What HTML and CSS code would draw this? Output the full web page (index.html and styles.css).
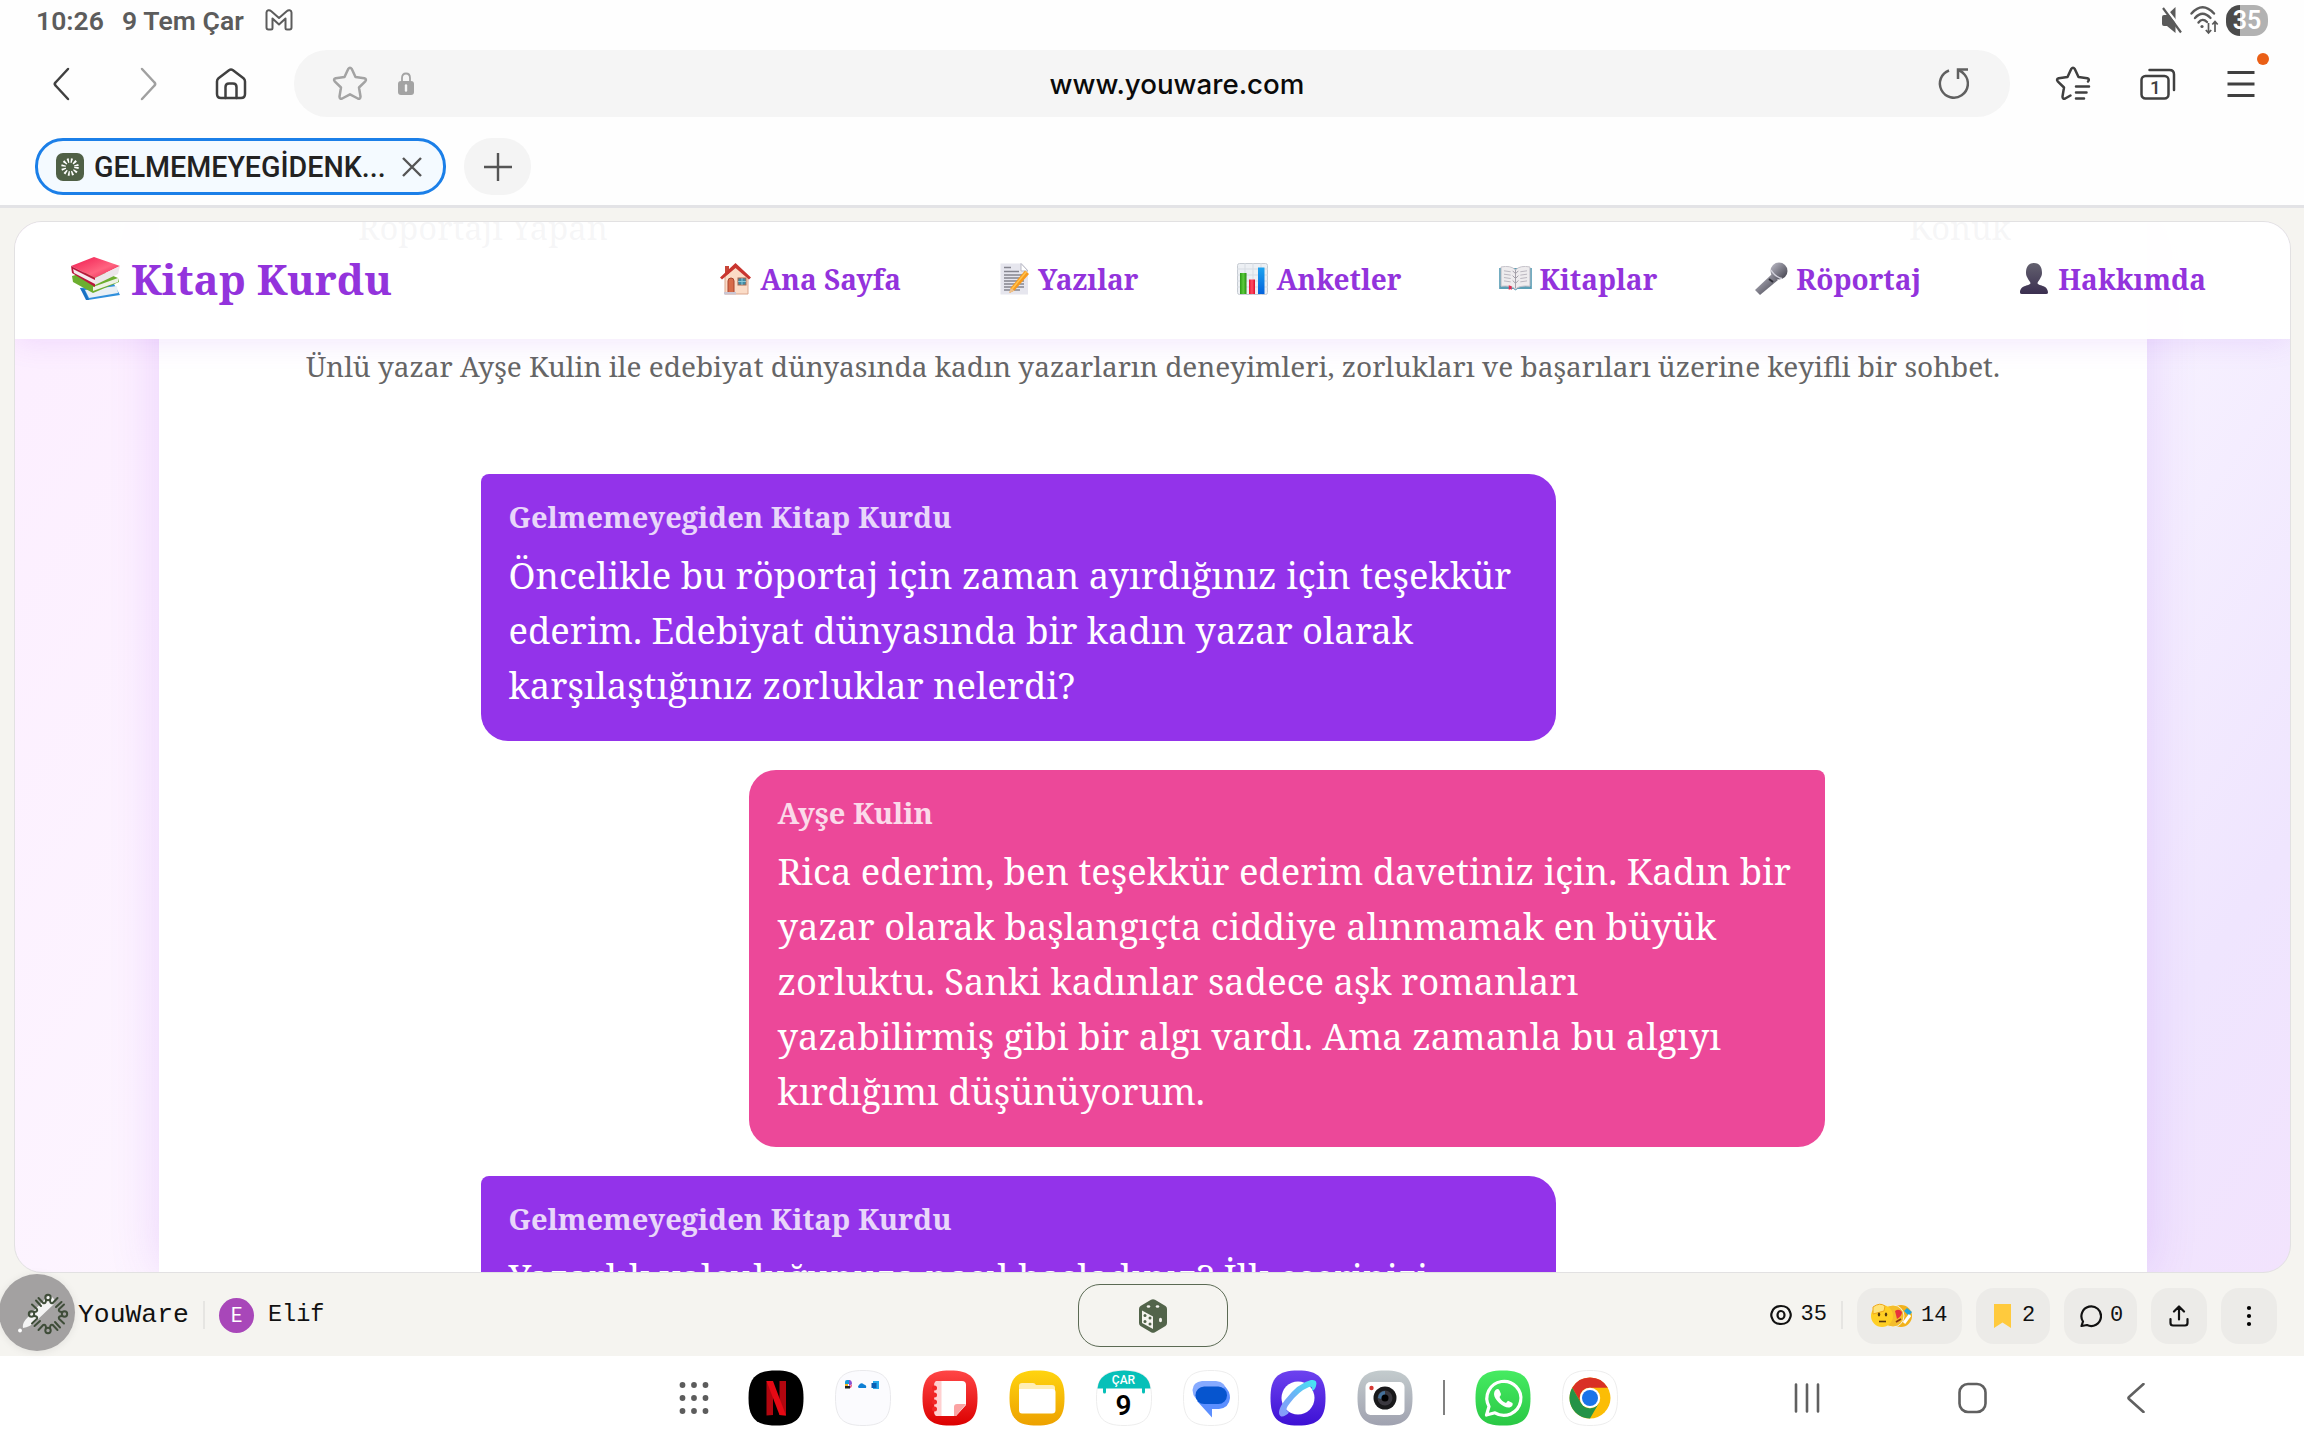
FILE: index.html
```html
<!DOCTYPE html>
<html lang="tr">
<head>
<meta charset="utf-8">
<title>Kitap Kurdu</title>
<link rel="stylesheet" href="styles.css">
</head>
<body>
<svg class="defs" width="0" height="0">
  <defs>
    <path id="squircle" d="M28 .5C48.500 .5 55.500 8 55.500 28S48.500 55.500 28 55.500.5 48 .5 28 7.500.5 28 .5Z"/>
    <linearGradient id="gRed" x2="0" y2="1"><stop stop-color="#ff4646"/><stop offset="1" stop-color="#dc0000"/></linearGradient>
    <linearGradient id="gYellow" x2="0" y2="1"><stop stop-color="#ffd40f"/><stop offset="1" stop-color="#eda100"/></linearGradient>
    <linearGradient id="gViolet" x2="0" y2="1"><stop stop-color="#6d42ef"/><stop offset="1" stop-color="#3d10d4"/></linearGradient>
    <linearGradient id="gRing" x1="1" y1="0" x2="0" y2="1"><stop stop-color="#43eaf2"/><stop offset=".5" stop-color="#6ab4f6"/><stop offset="1" stop-color="#8c96fb"/></linearGradient>
    <linearGradient id="gGrey" x2="0" y2="1"><stop stop-color="#c3cbcd"/><stop offset="1" stop-color="#a0a2b0"/></linearGradient>
    <linearGradient id="gGreen" x2="0" y2="1"><stop stop-color="#46eb62"/><stop offset="1" stop-color="#2ac845"/></linearGradient>
    <linearGradient id="gBook" x2="1" y2="1"><stop stop-color="#f0194f"/><stop offset=".6" stop-color="#ff6480"/><stop offset="1" stop-color="#e4184c"/></linearGradient>
    <linearGradient id="gMic" x2="1" y2="1"><stop stop-color="#c0bfcb"/><stop offset="1" stop-color="#3b3a45"/></linearGradient>
    <linearGradient id="gMan" x2="0" y2="1"><stop stop-color="#63616f"/><stop offset="1" stop-color="#3b2f50"/></linearGradient>
    <linearGradient id="gBarG" x2="1"><stop stop-color="#2a9b12"/><stop offset=".5" stop-color="#5ccc3c"/><stop offset="1" stop-color="#278c12"/></linearGradient>
    <linearGradient id="gBarR" x2="1"><stop stop-color="#e91235"/><stop offset=".5" stop-color="#ff4e62"/><stop offset="1" stop-color="#e00a2c"/></linearGradient>
    <linearGradient id="gBarB" x2="0" y2="1"><stop stop-color="#1da3ee"/><stop offset="1" stop-color="#0462dc"/></linearGradient>
    <g id="ray"><circle cx="0" cy="-16.500" r="2.700"/><path d="M-2-14Q-2-10-4.800-11L-9.500-16M2-14Q2-10 4.800-11L9.500-16M-7-8L-12-13.500"/></g>
  </defs>
</svg>

<div class="status">
  <span class="clock">10:26</span><span class="date">9 Tem Çar</span>
  <svg class="gmail" width="28" height="22" viewBox="0 0 28 22"><path d="M1.500 18.500V3.500C1.500 1 4.500.5 6 2L14 9L22 2C23.500.5 26.500 1 26.500 3.500V18.500Q26.500 20.500 24.500 20.500H22Q20.500 20.500 20.500 19V9.500L14 15.500L7.500 9.500V19Q7.500 20.500 6 20.500H3.500Q1.500 20.500 1.500 18.500Z"/></svg>
  <svg class="mute" width="22" height="30" viewBox="0 0 22 30"><path d="M1 12Q1 10 3 10H6L14.500 2V28L6 21H3Q1 21 1 19Z" fill="#5a5a5a"/><path d="M3.500 2L21.500 25" stroke="#fefefe" stroke-width="2.500"/><path d="M2 3L20 27.500" stroke="#5a5a5a" stroke-width="2.200"/></svg>
  <svg class="wifi" width="30" height="32" viewBox="0 0 30 32"><g fill="none" stroke="#5a5a5a" stroke-width="2.400" stroke-linecap="round"><path d="M1.500 9.500Q12.500-3 24 9.500"/><path d="M5 14Q12.500 5.500 20.500 14"/><path d="M8.500 18.500Q12.500 13.500 17 18"/></g><circle cx="12" cy="22.500" r="1.600" fill="#5a5a5a"/><path d="M18.500 19V28.500M15.800 26L18.500 29L21.200 26M25 28V18M22.300 20.500L25 17.500L27.700 20.500" fill="none" stroke="#5a5a5a" stroke-width="1.700"/></svg>
  <span class="battery">35</span>
</div>

<div class="toolbar">
  <svg class="ic back" width="20" height="34" viewBox="0 0 20 34"><path d="M17 2L4.500 15.500Q3 17 4.500 18.500L17 32"/></svg>
  <svg class="ic fwd" width="20" height="34" viewBox="0 0 20 34"><path d="M3 2L15.500 15.500Q17 17 15.500 18.500L3 32"/></svg>
  <svg class="ic home" width="32" height="32" viewBox="0 0 32 32"><path d="M2 13.500Q2 11.500 3.500 10.200L14 2.200Q16 .8 18 2.200L28.500 10.200Q30 11.500 30 13.500V26Q30 30 26 30H6Q2 30 2 26Z"/><path d="M10.500 30V19Q10.500 15.500 14 15.500H18Q21.500 15.500 21.500 19V30"/></svg>
  <div class="urlbar">
    <svg class="star" width="36" height="35" viewBox="0 0 36 35"><path d="M16.200 3Q18 .6 19.800 3L23.500 11L32.300 12.200Q35 13 33.300 15.300L27 21.500L28.500 30.500Q28.500 33.400 25.800 32.500L18 28.300L10.200 32.500Q7.500 33.400 7.500 30.500L9 21.500L2.700 15.300Q1 13 3.700 12.200L12.500 11Z"/></svg>
    <svg class="lock" width="16" height="23" viewBox="0 0 16 23"><path d="M4 11V6Q4 1.500 8 1.500T12 6V11" fill="none" stroke="#a3a3a3" stroke-width="1.800"/><rect y="9" width="16" height="14" rx="3" fill="#a3a3a3"/><path d="M8 13.500V18.500" stroke="#f5f5f5" stroke-width="2.400" stroke-linecap="round"/></svg>
    <span class="url">www.youware.com</span>
    <svg class="reload" width="34" height="34" viewBox="0 0 34 34"><path d="M12 3.500A14 14 0 1 0 27.500 7.500Q25 4.500 21.500 3"/><path d="M21 12V2.500H31"/></svg>
  </div>
  <svg class="ic fav" width="36" height="35" viewBox="0 0 36 35"><path d="M33 15.500Q35 13 32.300 12.200L23.500 11L19.800 3Q18 .6 16.200 3L12.500 11L3.700 12.200Q1 13 2.700 15.300L9 21.500L7.500 30.500Q7.500 33.400 10.200 32.500L15.500 29.500"/><path d="M21 20.500H34M21 26.500H31.500M21 32.500H29"/></svg>
  <div class="tabs"><svg class="ic" width="36" height="32" viewBox="0 0 36 32"><rect x="1.500" y="8" width="27" height="22.500" rx="4"/><path d="M9.500 2H29.500Q34 2 34 6.500V22"/></svg><span class="tabs-n">1</span></div>
  <svg class="ic menu" width="28" height="28" viewBox="0 0 28 28"><path d="M.5 2.500H27.500M.5 14H27.500M.5 25.500H27.500"/></svg>
  <i class="dot"></i>
</div>

<div class="tabstrip">
  <div class="tab">
    <svg width="28" height="28" viewBox="0 0 28 28"><rect width="28" height="28" rx="7" fill="#4f6046"/><circle cx="14" cy="14" r="6.500" fill="none" stroke="#fff" stroke-width="4.500" stroke-dasharray="1.600 1.800"/></svg>
    <span>GELMEMEYEGİDENK...</span>
    <svg class="x" width="20" height="20" viewBox="0 0 20 20"><path d="M1 1L19 19M19 1L1 19"/></svg>
  </div>
  <div class="plus"><svg class="x" width="28" height="28" viewBox="0 0 28 28"><path d="M14 0V28M0 14H28"/></svg></div>
</div>

<main class="stage">
  <div class="card">
    <div class="panel">
      <div class="roles"><span>Röportajı Yapan</span><span>Konuk</span></div>
      <p class="intro">Ünlü yazar Ayşe Kulin ile edebiyat dünyasında kadın yazarların deneyimleri, zorlukları ve başarıları üzerine keyifli bir sohbet.</p>
      <div class="chat">
        <div class="msg ask"><b>Gelmemeyegiden Kitap Kurdu</b><p>Öncelikle bu röportaj için zaman ayırdığınız için teşekkür<br>ederim. Edebiyat dünyasında bir kadın yazar olarak<br>karşılaştığınız zorluklar nelerdi?</p></div>
        <div class="msg reply"><b>Ayşe Kulin</b><p>Rica ederim, ben teşekkür ederim davetiniz için. Kadın bir<br>yazar olarak başlangıçta ciddiye alınmamak en büyük<br>zorluktu. Sanki kadınlar sadece aşk romanları<br>yazabilirmiş gibi bir algı vardı. Ama zamanla bu algıyı<br>kırdığımı düşünüyorum.</p></div>
        <div class="msg ask"><b>Gelmemeyegiden Kitap Kurdu</b><p>Yazarlık yolculuğunuza nasıl başladınız? İlk eserinizi</p></div>
      </div>
    </div>
    <header class="site">
      <div class="brand">
        <svg width="50" height="44" viewBox="0 0 50 44"><path d="M9 31L43 27L49 38L17 43Z" fill="#2f8fdc"/><path d="M14 33L46 29L47 36L18 41Z" fill="#e9f0f6"/><path d="M9 31L15 43L18 43L13 32Z" fill="#1a72c4"/><path d="M1 19L26 12L47 21L48 25L22 36L2 25Z" fill="#6cae2f"/><path d="M22 30L47 21L47 25L22 34Z" fill="#eef2e6"/><path d="M0 9L23 0L49 9L24 21Z" fill="url(#gBook)"/><path d="M0 9L24 21V30L1 16Z" fill="#b9163c"/><path d="M2 12L24 23V27L3 16Z" fill="#f5e9ed"/><path d="M24 21L49 9L47 17L24 28Z" fill="#ece6ea"/></svg>
        <span>Kitap Kurdu</span>
      </div>
      <nav>
        <a><svg width="32" height="32" viewBox="0 0 32 32"><path d="M5 13L16 4L28 13V31H5Z" fill="#fbdcc7" stroke="#dba68d"/><path d="M5 3H9V11H5Z" fill="#c84638"/><path d="M0 14.500L15.500 0L31 14.500L29 16.500L15.500 5L2 16.500Z" fill="#c9352f"/><path d="M8 30V18Q8 15 11 15T14 18V30Z" fill="#d76c4a" stroke="#a8452e"/><rect x="18" y="15" width="8" height="7" fill="#3f8ba5" stroke="#a86950"/><path d="M22 15V22M18 18.500H26" stroke="#8ac8d8"/><path d="M4 29H16V31.500H4Z" fill="#cac6d3"/></svg>Ana Sayfa</a>
        <a><svg width="30" height="32" viewBox="0 0 30 32"><path d="M.5.500H22L28 7V31.500H.5Z" fill="#e6e6ee"/><path d="M21 .5V8H28Z" fill="#fff" stroke="#b9b9c4"/><path d="M4 4.500H11M4 8.500H19M4 12H24M4 15H24M4 18H24M4 21H24M4 24H24M4 27H20" stroke="#85858f" stroke-width="1.300"/><path d="M25 7.500L29 11L14.500 27.500L9.500 30L10.500 25Z" fill="#f79a1e"/><path d="M26.500 8.500L12 26" stroke="#ffc34f" stroke-width="1.500"/><path d="M9.500 30L10.500 25L14.500 27.500Z" fill="#edc08d"/></svg>Yazılar</a>
        <a><svg width="31" height="32" viewBox="0 0 31 32"><rect x=".5" y=".5" width="30" height="31" rx="2" fill="#edf0f4" stroke="#c6cbd2"/><path d="M0 6H31M0 12H31M0 18H31M0 24H31M8 0V32M16 0V32M24 0V32" stroke="#d7dce3"/><rect x="3" y="10" width="6.500" height="21" fill="url(#gBarG)"/><rect x="12" y="16.500" width="6" height="14.500" fill="url(#gBarR)"/><rect x="21" y="4.500" width="6.500" height="26.500" fill="url(#gBarB)"/></svg>Anketler</a>
        <a class="books"><svg width="33" height="25" viewBox="0 0 34 26"><path d="M0 2H34V24H19L17 25.500L15 24H0Z" fill="#5b9fb6"/><path d="M2 1Q12-1 17 4Q22-1 32 1V21Q21 20 17 24Q13 20 2 21Z" fill="#eeecee" stroke="#c4c1c8"/><path d="M17 4V23M14 5L17 8L20 5M14 10L17 13L20 10M14 15L17 18L20 15" fill="none" stroke="#a19da7"/><path d="M5 5L12 6M5 8.500L12 9.500M5 12L12 13M5 15.500L12 16.500M29 5L22 6M29 8.500L22 9.500M29 12L22 13M29 15.500L22 16.500" stroke="#b8b4bd"/><path d="M10 20L13 21V25L11.500 24L10 25Z" fill="#e02b50"/></svg>Kitaplar</a>
        <a class="talk"><svg width="34" height="34" viewBox="0 0 34 34"><path d="M18 12L24 18L6 33L1 28Z" fill="url(#gMic)"/><path d="M15 17L19 20" stroke="#2e2d36" stroke-width="2"/><circle cx="25" cy="9" r="8.500" fill="url(#gMic)"/><path d="M17 8Q21 15 28 16.500" fill="none" stroke="#d2d1db" stroke-width="1.500"/></svg>Röportaj</a>
        <a class="about"><svg width="28" height="31" viewBox="0 0 28 31"><path d="M14 0C20 0 22 4.500 22 10C22 14.500 18 18 17.500 20C17.500 23 28 21.500 28 29.500Q28 31 26 31H2Q0 31 0 29.500C0 21.500 10.500 23 10.500 20C10 18 6 14.500 6 10C6 4.500 8 0 14 0Z" fill="url(#gMan)"/></svg>Hakkımda</a>
      </nav>
    </header>
  </div>
</main>

<footer class="bar">
  <div class="fab"><svg width="76" height="78" viewBox="0 0 76 78"><path d="M24 54C23 49 27 45 30 42L47 24Q50 20 53 23L55 25Q57 28 54 31L36 48Q31 53 24 54Z" fill="#f4f4f4"/><circle cx="21" cy="56.500" r="1.900" fill="#fff"/><g transform="translate(49 40)" fill="none" stroke="#3f4d39" stroke-width="2" stroke-linecap="round" stroke-linejoin="round"><use href="#ray"/><use href="#ray" transform="rotate(90)"/><use href="#ray" transform="rotate(180)"/><use href="#ray" transform="rotate(270)"/></g></svg></div>
  <span class="yw">YouWare</span><i class="sep"></i><span class="avatar">E</span><span class="user">Elif</span>
  <div class="dice"><svg width="28" height="34" viewBox="0 0 28 34"><path d="M12 .8Q14-.4 16 .8L26.500 7Q28 8 28 10V24Q28 26 26.500 27L16 33.200Q14 34.400 12 33.200L1.500 27Q0 26 0 24V10Q0 8 1.500 7Z" fill="#52644a"/><path d="M3 11.500L14 17.500V30L3 24Z" fill="#f5f4f0"/><g fill="#52644a"><circle cx="6" cy="16.500" r="1.500"/><circle cx="11" cy="19" r="1.500"/><circle cx="6" cy="22.500" r="1.500"/><circle cx="11" cy="25" r="1.500"/></g><g fill="#f5f4f0"><ellipse cx="9.500" cy="7.500" rx="1.800" ry="1.200"/><ellipse cx="18.500" cy="7.500" rx="1.800" ry="1.200"/><ellipse cx="21.500" cy="21" rx="1.500" ry="2.300"/></g></svg></div>
  <div class="stats">
    <span class="views"><svg width="22" height="22" viewBox="0 0 22 22"><path d="M11 2C16 2 19 4.500 20 8Q21.500 11 20 14C19 17.500 16 20 11 20S3 17.500 2 14Q.5 11 2 8C3 4.500 6 2 11 2Z"/><ellipse cx="11" cy="11" rx="3.500" ry="4"/></svg>35</span>
    <i class="sep"></i>
    <span class="pill p1"><span class="faces"><svg width="42" height="26" viewBox="0 0 42 26"><circle cx="30" cy="13" r="11" fill="#f2b21b"/><path d="M36 5L41 9L38 13L33 8Z" fill="#25a3d8"/><path d="M33 20L39 12" stroke="#fff" stroke-width="3"/><circle cx="22" cy="13" r="11" fill="#f4bd2a" stroke="#f5f0e0" /><path d="M24 8Q28 5 31 9Q31 13 26 16Z" fill="#e8333b"/><path d="M25 19L30 16" stroke="#8b3a12" stroke-width="2"/><circle cx="11" cy="13" r="11" fill="#ffcf24"/><path d="M2 4Q9-1 14 3L13 8L2 11Z" fill="#ffe37a" stroke="#f0a818"/><ellipse cx="8" cy="11.500" rx="1.200" ry="2" fill="#593b10"/><ellipse cx="15" cy="11.500" rx="1.200" ry="2" fill="#593b10"/><path d="M8 18.500H15" stroke="#593b10" stroke-width="1.600"/></svg></span>14</span>
    <span class="pill p2"><svg width="17" height="24" viewBox="0 0 17 24"><path d="M0 0H17V24L8.500 18.500L0 24Z" fill="#ffca3d"/></svg>2</span>
    <span class="pill p3"><svg class="ln" width="22" height="24" viewBox="0 0 22 24"><path d="M1.500 22L3 17.500A9.800 9.800 0 1 1 7 21Z"/></svg>0</span>
    <span class="pill p4"><svg class="ln" width="20" height="22" viewBox="0 0 20 22"><path d="M10 14.500V2M5 6.500L10 1.500L15 6.500M1.500 14V18Q1.500 20.500 4 20.500H16Q18.500 20.500 18.500 18V14"/></svg></span>
    <span class="pill p4"><svg width="6" height="22" viewBox="0 0 6 22"><circle cx="3" cy="3" r="2.100"/><circle cx="3" cy="11" r="2.100"/><circle cx="3" cy="19" r="2.100"/></svg></span>
  </div>
</footer>

<div class="dock">
  <div class="apps">
    <svg width="30" height="34" viewBox="0 0 30 34" fill="#5c5c5c"><circle cx="3.500" cy="4" r="2.900"/><circle cx="15" cy="4" r="2.900"/><circle cx="26.500" cy="4" r="2.900"/><circle cx="3.500" cy="17" r="2.900"/><circle cx="15" cy="17" r="2.900"/><circle cx="26.500" cy="17" r="2.900"/><circle cx="3.500" cy="30" r="2.900"/><circle cx="15" cy="30" r="2.900"/><circle cx="26.500" cy="30" r="2.900"/></svg>
    <svg class="app" viewBox="0 0 56 56"><use href="#squircle"/><path d="M18.500 11H25V45L18.500 45.500ZM31.500 11H38V45.500L31.500 45Z" fill="#b1060f"/><path d="M18.500 11H25L38 45.500L31.500 45Z" fill="#e50914"/></svg>
    <svg class="app" viewBox="0 0 56 56"><use href="#squircle" fill="#fbfbfe" stroke="#e9e9ec"/><g transform="translate(9 10)"><path d="M1 2Q1 0 3 0H6V4H1Z" fill="#159cd8"/><path d="M5 0Q8 0 8 4L5 6Z" fill="#8a4fd0"/><path d="M1 4H4V8H1Z" fill="#f2b51d"/><path d="M4 8L8 4Q8 8 6 8Z" fill="#e35480"/><path d="M1 6H6V8.500H1Z" fill="#222"/></g><path d="M24 18Q22 17 24 15Q26 12 29 14.500Q32 15 31 18Z" fill="#0f7fd4"/><rect x="38" y="11" width="6" height="8" fill="#28a8ea"/><rect x="36.500" y="13" width="5" height="5" fill="#0a5fb4"/></svg>
    <svg class="app" viewBox="0 0 56 56"><use href="#squircle" fill="url(#gRed)"/><path d="M16 11H40Q44 11 44 15V35L34 46H16Q12.500 46 12.500 43V14Q12.500 11 16 11Z" fill="#fff"/><path d="M12.500 14Q12.500 11 16 11H19.500V46H16Q12.500 46 12.500 43Z" fill="#ffd0d0"/><path d="M44 34L34 46L32 46V37Q32 34 35 34Z" fill="#fba3a3"/><g fill="#f12626"><circle cx="12.500" cy="18" r="2.500"/><circle cx="12.500" cy="25" r="2.500"/><circle cx="12.500" cy="32" r="2.500"/><circle cx="12.500" cy="39" r="2.500"/></g></svg>
    <svg class="app" viewBox="0 0 56 56"><use href="#squircle" fill="url(#gYellow)"/><path d="M10 16Q10 13 13 13H24Q26 13 27 15H43Q46 15 46 18V24H10Z" fill="#ffeeb5"/><path d="M10 19H43Q46.500 19 46.500 22V40Q46.500 43.500 43 43.500H13Q10 43.500 10 40Z" fill="#fff"/></svg>
    <div class="cal"><svg class="app" viewBox="0 0 56 56"><use href="#squircle" fill="#fff" stroke="#ededed"/><path d="M1.500 18.500Q3 1 28 .5Q53 1 54.500 18.500Z" fill="#06c0b8"/><path d="M8.500 17V22M47.500 17V22" stroke="#06c0b8" stroke-width="3" stroke-linecap="round"/></svg><span class="cal-m">ÇAR</span><span class="cal-d">9</span></div>
    <svg class="app" viewBox="0 0 56 56"><use href="#squircle" fill="#fff" stroke="#ededed"/><path d="M19 11H33Q43 12 44 22L38 32H20Q10 30 9.500 20Q10 12 19 11Z" fill="#86aaff"/><path d="M42 17Q47 21 47 28Q46 38 36 39H29V47.500L14 31Z" fill="#5c8fff"/><rect x="12.500" y="16.500" width="31.500" height="17.500" rx="8.700" fill="#0655cf"/></svg>
    <svg class="app" viewBox="0 0 56 56"><use href="#squircle" fill="url(#gViolet)"/><circle cx="28" cy="28" r="16.500" fill="#fff"/><path d="M10.500 46Q6 42 15 30Q28 13 41 10Q48 9 46 16Q45 20 42 21Q43 16 39 17Q29 21 20 33Q15 39 17 41Q21 42 16 45Q12 47.500 10.500 46Z" fill="url(#gRing)"/></svg>
    <svg class="app" viewBox="0 0 56 56"><use href="#squircle" fill="url(#gGrey)"/><rect x="8.500" y="12" width="39" height="33" rx="5" fill="#fff"/><circle cx="14.500" cy="18" r="2.200" fill="#d63a34"/><circle cx="28" cy="28" r="11.500" fill="#19191b"/><circle cx="28" cy="28" r="7.500" fill="#3a383f"/><path d="M21 28A7 7 0 0 1 28 21V25L24 29Z" fill="#45719a"/><circle cx="28" cy="28" r="3.500" fill="#000"/></svg>
    <i class="rule"></i>
    <svg class="app" viewBox="0 0 56 56"><use href="#squircle" fill="url(#gGreen)"/><path d="M11.500 45L14 36.500A17 17 0 1 1 20 42.800Z" fill="none" stroke="#fff" stroke-width="3.200" stroke-linejoin="round"/><path d="M20.500 20Q23 18 24.500 20.500L26 24Q26 25.500 24.500 27Q26.500 31.500 31 33L33 30.800L37.500 33Q38.500 36 34.500 37.500C29 38.500 19 30 19 24Q19 21.500 20.500 20Z" fill="#fff"/></svg>
    <svg class="app" viewBox="0 0 56 56"><use href="#squircle" fill="#fff" stroke="#ededed"/><circle cx="28" cy="28" r="20.500" fill="#fbbd05"/><path d="M10.200 17.800A20.500 20.500 0 0 1 45.800 17.800H28A10.200 10.200 0 0 0 19 33Z" fill="#d93025"/><path d="M10.200 17.800L19.200 33.200A10.200 10.200 0 0 0 36.800 33.200L28 48.500A20.500 20.500 0 0 1 10.200 17.800Z" fill="#249347"/><circle cx="28" cy="28" r="10.200" fill="#fff"/><circle cx="28" cy="28" r="8" fill="#1a73e8"/></svg>
  </div>
  <div class="nav">
    <svg width="26" height="30" viewBox="0 0 26 30"><path d="M2 1.500V28.500M13 1.500V28.500M24 1.500V28.500"/></svg>
    <svg width="30" height="32" viewBox="0 0 30 32"><rect x="1.500" y="2" width="26" height="28" rx="8.500"/></svg>
    <svg width="19" height="30" viewBox="0 0 19 30"><path d="M17.500 1L3 14Q2 15 3 16L17.500 29"/></svg>
  </div>
</div>
</body>
</html>
```
FILE: styles.css
```css
* { box-sizing: border-box; margin: 0; padding: 0; }
body { width: 2304px; height: 1440px; overflow: hidden; background: #fefefe; font-family: Roboto, sans-serif; display: flex; flex-direction: column; }
svg { display: block; flex: none; }
.defs { position: absolute; }

.status { height: 42px; display: flex; align-items: center; padding: 0 0 2px 36px; font-size: 26.500px; font-weight: 600; color: #5c5c5c; }
.clock { width: 86px; }
.date { width: 143px; letter-spacing: .1px; }
.gmail { fill: none; stroke: #5c5c5c; stroke-width: 2; stroke-linejoin: round; }
.mute { margin-left: 1868px; }
.wifi { margin-left: 7px; }
.battery { margin-left: 6px; width: 42px; height: 31px; line-height: 31px; border-radius: 14px; background: linear-gradient(90deg, #4b4b4b 33%, #b2b2b2 33%); color: #fff; text-align: center; font-size: 25px; }

.toolbar { position: relative; height: 83px; display: flex; align-items: center; padding-left: 51px; }
.ic { fill: none; stroke: #404040; stroke-width: 2.500; stroke-linecap: round; stroke-linejoin: round; }
.fwd { stroke: #a0a0a0; margin-left: 68px; }
.home { margin-left: 56px; }
.urlbar { position: relative; width: 1716px; height: 67px; margin-left: 47px; border-radius: 33px; background: #f5f5f5; display: flex; align-items: center; }
.star { margin-left: 38px; fill: none; stroke: #a3a3a3; stroke-width: 2.500; stroke-linejoin: round; }
.lock { margin-left: 30px; }
.url { flex: 1; padding-left: 3px; text-align: center; font: 500 27.700px Inter, sans-serif; color: #0a0a0a; }
.reload { margin-right: 39px; fill: none; stroke: #606060; stroke-width: 2.500; }
.fav { margin-left: 45px; }
.tabs { position: relative; margin-left: 49px; }
.tabs-n { position: absolute; left: 10px; top: 9px; font-size: 19px; line-height: 21px; font-weight: 500; color: #404040; }
.menu { margin-left: 51px; stroke-width: 2.800; stroke-linecap: butt; }
.dot { position: absolute; left: 2257px; top: 11px; width: 12px; height: 12px; border-radius: 50%; background: #ea5f16; }

.tabstrip { height: 83px; padding: 13px 0 0 35px; display: flex; gap: 18px; border-bottom: 3px solid #e3e3e6; }
.tab { width: 411px; height: 57px; border: 3px solid #1b7fe8; border-radius: 28px; background: #f4faff; display: flex; align-items: center; padding-left: 18px; font-size: 28.600px; font-weight: 500; color: #222; }
.tab span { margin-left: 10px; width: 308px; }
.x { stroke: #555; stroke-width: 2.400; fill: none; }
.plus { width: 67px; height: 57px; border-radius: 28px; background: #f4f4f4; display: grid; place-items: center; }

.stage { height: 1065px; background: #f5f4f0; padding: 13px 13px 0 14px; }
.card { position: relative; height: 1052px; border: 1px solid #e2e1e2; border-radius: 28px; overflow: hidden; background: linear-gradient(125deg, #fceeff 0%, #fdf8ff 42%, #f9f5ff 68%, #efe5fe 90%, #f2e3fd 100%); }
.panel { width: 1988px; height: 1050px; margin-left: 144px; background: #fff; box-shadow: 0 0 46px rgba(147, 51, 234, .17); overflow: hidden; font-family: "Noto Serif", serif; }
.roles { display: flex; justify-content: space-between; margin-top: -14px; padding: 0 136px 0 199px; font-size: 32.700px; line-height: 40px; color: #4b5563; }
.intro { margin-top: 98px; text-align: center; font-size: 28px; line-height: 40px; color: #666; white-space: nowrap; }
.chat { width: 1344px; margin: 88px auto 0 322px; display: flex; flex-direction: column; gap: 28.800px; }
.msg { width: 1075px; padding: 29px 27px 28px 27.500px; color: #fff; }
.msg b { display: block; font-size: 29.080px; line-height: 29px; margin-bottom: 16.200px; opacity: .8; }
.msg p { font-size: 36.390px; line-height: 54.900px; white-space: nowrap; margin-bottom: .3px; }
.ask { background: #9333ea; border-radius: 8px 27px 27px 27px; }
.reply { width: 1076px; background: #ec4899; border-radius: 27px 8px 27px 27px; align-self: flex-end; padding-left: 28.500px; }
.site { position: absolute; left: 0; top: 0; width: 100%; height: 117px; background: rgba(255, 255, 255, .95); box-shadow: 0 3px 28px rgba(147, 51, 234, .12); display: flex; align-items: center; justify-content: space-between; padding: 0 84px 4px 56px; font-family: "Noto Serif", serif; font-weight: 700; color: #9333dc; }
.brand { display: flex; align-items: center; gap: 10px; font-size: 42px; line-height: 50px; }
nav { display: flex; gap: 99px; }
nav a { display: flex; align-items: center; gap: 8px; font-size: 28px; line-height: 40px; }
.books { margin-left: -1px; }
.books svg { margin-right: -1px; }
.talk { margin-left: -2px; }
.about svg { margin-right: 2px; }

.bar { position: relative; height: 83px; background: #f5f4f0; display: flex; align-items: center; font-family: "Liberation Mono", monospace; color: #111; }
.fab { position: absolute; left: -1px; top: 1px; width: 76px; height: 77px; border-radius: 50%; background: #a3a1a1; box-shadow: 0 1px 8px rgba(0, 0, 0, .08); }
.yw { margin-left: 78px; width: 125px; font-size: 26.400px; }
.sep { width: 2px; height: 28px; background: #e6e5e2; }
.avatar { margin-left: 14px; margin-top: 2px; width: 35px; height: 35px; line-height: 35px; border-radius: 50%; background: #a847b9; color: #fff; text-align: center; font-family: Roboto, sans-serif; font-size: 20px; }
.user { margin-left: 14px; width: 810px; font-size: 23.500px; }
.dice { width: 150px; height: 63px; margin-top: 2px; border: 1px solid #5b6a54; border-radius: 22px; display: grid; place-items: center; }
.stats { margin-left: auto; padding-right: 27px; display: flex; align-items: center; font-size: 22px; }
.stats > span { display: flex; align-items: center; }
.views svg { margin-right: 9px; fill: none; stroke: #111; stroke-width: 2.200; }
.views + .sep { margin: 0 14px 0 14px; }
.pill { height: 56px; margin-top: 2px; border-radius: 18px; background: #ecebe8; margin-left: 14px; }
.sep + .pill { margin-left: 0; }
.p1 { width: 105px; padding-left: 14px; }
.faces { margin-right: 8px; }
.p2 { width: 74px; padding-left: 18px; gap: 11px; }
.p3 { width: 73px; padding-left: 16px; gap: 8px; }
.p4 { width: 56px; justify-content: center; }
.ln { fill: none; stroke: #111; stroke-width: 2.200; stroke-linecap: round; stroke-linejoin: round; }

.dock { height: 84px; background: #fff; display: flex; align-items: center; padding: 0 159px 1px 679px; justify-content: space-between; }
.apps { display: flex; align-items: center; gap: 31px; }
.apps > svg:first-child { margin-right: 7.500px; }
.app { width: 56px; height: 56px; }
.cal { position: relative; }
.cal span { position: absolute; left: 0; width: 56px; text-align: center; line-height: 1; }
.cal-m { top: 4px; font-size: 12px; font-weight: 500; color: #fff; }
.cal-d { top: 22px; font-size: 28px; font-weight: 600; color: #000; }
.rule { width: 2px; height: 35px; background: #808080; margin: 0 -1px; }
.nav { display: flex; align-items: center; gap: 138px; }
.nav svg { fill: none; stroke: #606060; stroke-width: 2.600; stroke-linecap: round; stroke-linejoin: round; }
```
